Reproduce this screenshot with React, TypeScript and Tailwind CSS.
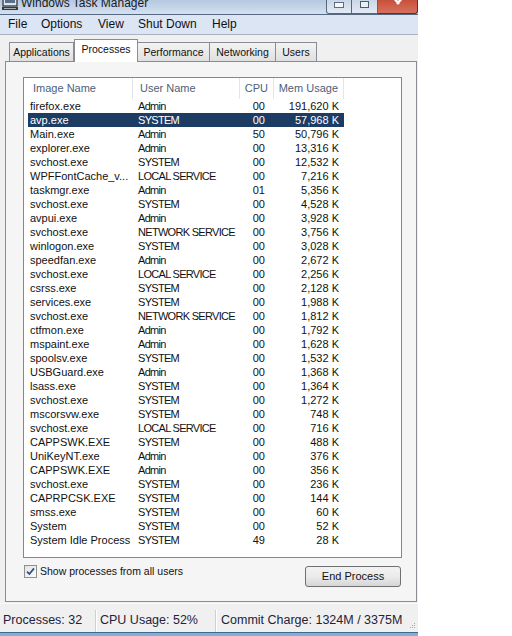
import React from 'react';

type Row = [string, string, string, string];

const rows: Row[] = [
  ['firefox.exe', 'Admin', '00', '191,620 K'],
  ['avp.exe', 'SYSTEM', '00', '57,968 K'],
  ['Main.exe', 'Admin', '50', '50,796 K'],
  ['explorer.exe', 'Admin', '00', '13,316 K'],
  ['svchost.exe', 'SYSTEM', '00', '12,532 K'],
  ['WPFFontCache_v...', 'LOCAL SERVICE', '00', '7,216 K'],
  ['taskmgr.exe', 'Admin', '01', '5,356 K'],
  ['svchost.exe', 'SYSTEM', '00', '4,528 K'],
  ['avpui.exe', 'Admin', '00', '3,928 K'],
  ['svchost.exe', 'NETWORK SERVICE', '00', '3,756 K'],
  ['winlogon.exe', 'SYSTEM', '00', '3,028 K'],
  ['speedfan.exe', 'Admin', '00', '2,672 K'],
  ['svchost.exe', 'LOCAL SERVICE', '00', '2,256 K'],
  ['csrss.exe', 'SYSTEM', '00', '2,128 K'],
  ['services.exe', 'SYSTEM', '00', '1,988 K'],
  ['svchost.exe', 'NETWORK SERVICE', '00', '1,812 K'],
  ['ctfmon.exe', 'Admin', '00', '1,792 K'],
  ['mspaint.exe', 'Admin', '00', '1,628 K'],
  ['spoolsv.exe', 'SYSTEM', '00', '1,532 K'],
  ['USBGuard.exe', 'Admin', '00', '1,368 K'],
  ['lsass.exe', 'SYSTEM', '00', '1,364 K'],
  ['svchost.exe', 'SYSTEM', '00', '1,272 K'],
  ['mscorsvw.exe', 'SYSTEM', '00', '748 K'],
  ['svchost.exe', 'LOCAL SERVICE', '00', '716 K'],
  ['CAPPSWK.EXE', 'SYSTEM', '00', '488 K'],
  ['UniKeyNT.exe', 'Admin', '00', '376 K'],
  ['CAPPSWK.EXE', 'Admin', '00', '356 K'],
  ['svchost.exe', 'SYSTEM', '00', '236 K'],
  ['CAPRPCSK.EXE', 'SYSTEM', '00', '144 K'],
  ['smss.exe', 'SYSTEM', '00', '60 K'],
  ['System', 'SYSTEM', '00', '52 K'],
  ['System Idle Process', 'SYSTEM', '49', '28 K'],
];

function TitleBar() {
  return (
    <div className="h-[14px] flex overflow-hidden bg-gradient-to-b from-[#b4c8e0] to-[#d4e1f0]">
      {/* app icon, mostly cut off by the top edge */}
      <svg width="18" height="14" viewBox="0 0 18 14" className="ml-[1px] shrink-0">
        <rect x="2" y="-6" width="14" height="12" fill="#dfe6ee" stroke="#2b2b2b" strokeWidth="1.2" />
        <rect x="4" y="-3" width="10" height="6" fill="#5a6f8a" />
        <rect x="1" y="7" width="16" height="3" fill="#3a3a3a" />
        <line x1="3" y1="8.5" x2="15" y2="8.5" stroke="#bfc7d0" strokeWidth="0.8" />
      </svg>
      <div className="ml-[2px] -mt-[3px] text-[12px] leading-[12px] text-[#1a1a1a] whitespace-nowrap">
        Windows Task Manager
      </div>
      <div className="ml-auto flex h-[14px]">
        <div className="w-[26px] h-[14px] border border-t-0 border-[#56687f] rounded-bl-[3px] bg-gradient-to-b from-[#c9d6e5] to-[#e3ebf4] flex justify-center">
          <div className="mt-[2px] w-[10px] h-[6px] bg-[#f4f7fb] border border-[#5d6c80]" />
        </div>
        <div className="w-[26px] h-[14px] border border-t-0 border-l-0 border-[#56687f] bg-gradient-to-b from-[#c9d6e5] to-[#e3ebf4] flex justify-center">
          <div className="mt-[1px] w-[9px] h-[7px] border border-[#4d5b6e] bg-[#e8eef5]" />
        </div>
        <div className="w-[40px] h-[14px] border border-t-0 border-l-0 border-[#6b2a22] rounded-br-[3px] bg-gradient-to-b from-[#c8503c] to-[#d6715c] flex justify-center">
          <svg width="12" height="10" viewBox="0 0 12 10">
            <path d="M1 -3 L7 4 M11 -3 L5 4" stroke="#ffffff" strokeWidth="2.4" />
          </svg>
        </div>
      </div>
    </div>
  );
}

function MenuBar() {
  return (
    <div className="h-[21px] border-t border-b border-t-[#55687f] border-b-[#a9b3c1] bg-[#dce5f3] flex items-center pl-[8px] text-[12px] leading-[19px] text-[#111]">
      <span className="w-[33px]">File</span>
      <span className="w-[57px]">Options</span>
      <span className="w-[40px]">View</span>
      <span className="w-[74px]">Shut Down</span>
      <span>Help</span>
    </div>
  );
}

function Tabs() {
  const idle = 'h-[19px] mb-[1px] border border-b-0 border-[#898c95] bg-gradient-to-b from-[#f3f3f3] to-[#e0e0e0] text-center text-[10.5px] leading-[18px] text-[#111]';
  return (
    <div className="relative z-10 -mb-px h-[23px] flex items-end pl-[9px]">
      <div className={`${idle} w-[65px]`}>Applications</div>
      <div className="w-[64px] h-[23px] border border-b-0 border-[#898c95] bg-white text-center text-[10.5px] leading-[18px] text-[#111]">
        Processes
      </div>
      <div className={`${idle} w-[73px] -ml-px`}>Performance</div>
      <div className={`${idle} w-[67px] -ml-px`}>Networking</div>
      <div className={`${idle} w-[42px] -ml-px`}>Users</div>
    </div>
  );
}

function ProcessList() {
  return (
    <div className="w-[379px] h-[481px] border border-[#828790] bg-white overflow-hidden">
      <div className="flex h-[21px] text-[11px] leading-[21px] text-[#4c607a]">
        <div className="w-[109px] pl-[9px] border-r border-[#e2e5ea]">Image Name</div>
        <div className="w-[107px] pl-[7px] border-r border-[#e2e5ea]">User Name</div>
        <div className="w-[34px] pr-[5px] text-right border-r border-[#e2e5ea]">CPU</div>
        <div className="w-[70px] pr-[5px] text-right border-r border-[#e2e5ea]">Mem Usage</div>
      </div>
      {rows.map((r, i) => {
        const sel = i === 1;
        return (
          <div
            key={i}
            className={`ml-[4px] flex w-[316px] h-[14px] text-[11px] leading-[14px] whitespace-nowrap ${sel ? 'bg-[#1c3c63] text-white' : 'text-[#111]'}`}
          >
            <div className="w-[104px] pl-[2px] overflow-hidden">{r[0]}</div>
            <div className="w-[108px] pl-[6px] overflow-hidden tracking-[-0.7px]">{r[1]}</div>
            <div className="w-[34px] pr-[9px] text-right">{r[2]}</div>
            <div className="w-[70px] pr-[5px] text-right">{r[3]}</div>
          </div>
        );
      })}
    </div>
  );
}

function Panel() {
  return (
    <div className="ml-[5px] w-[412px] h-[541px] border border-[#898c95] bg-[#f5f5f5] pt-[15px] pl-[17px]">
      <ProcessList />
      <div className="w-[379px] mt-[7px] flex justify-between px-[1px]">
        <div className="flex items-start h-[22px]">
          <div className="w-[13px] h-[13px] border border-[#8e8f8f] bg-gradient-to-br from-[#e4e4e4] to-[#fbfbfb] flex items-center justify-center">
            <svg width="9" height="9" viewBox="0 0 9 9">
              <path d="M1 4.6 L3.4 7 L8 1.4" fill="none" stroke="#2c4e86" strokeWidth="1.7" />
            </svg>
          </div>
          <span className="ml-[3px] text-[10.5px] leading-[13px] text-[#111]">Show processes from all users</span>
        </div>
        <div className="mt-[1px] w-[96px] h-[21px] rounded-[3px] border border-[#707070] bg-gradient-to-b from-[#f2f2f2] via-[#ebebeb] to-[#d6d6d6] text-center text-[11px] leading-[19px] text-[#111]">
          End Process
        </div>
      </div>
    </div>
  );
}

function StatusBar() {
  return (
    <div className="h-[29px] flex items-center pt-[5px] border-t border-[#fafafa] text-[12.5px] text-[#24223a] whitespace-nowrap">
      <div className="w-[95px] pl-[3px]">Processes: 32</div>
      <div className="w-[2px] h-[22px] border-l border-r border-l-[#cfcfcf] border-r-white" />
      <div className="w-[118px] pl-[3px]">CPU Usage: 52%</div>
      <div className="w-[2px] h-[22px] border-l border-r border-l-[#cfcfcf] border-r-white" />
      <div className="flex-1 pl-[4px]">Commit Charge: 1324M / 3375M</div>
      <svg width="8" height="8" viewBox="0 0 8 8" className="mr-[2px] mt-[8px]">
        <rect x="6" y="2" width="1" height="1" fill="#a8a8a8" />
        <rect x="4" y="4" width="1" height="1" fill="#a8a8a8" />
        <rect x="6" y="4" width="1" height="1" fill="#a8a8a8" />
        <rect x="2" y="6" width="1" height="1" fill="#a8a8a8" />
        <rect x="4" y="6" width="1" height="1" fill="#a8a8a8" />
        <rect x="6" y="6" width="1" height="1" fill="#a8a8a8" />
      </svg>
    </div>
  );
}

export default function App() {
  return (
    <div className="w-[512px] h-[636px] bg-white flex font-['Liberation_Sans',Arial,sans-serif]">
      <div className="w-[418px] h-[636px] flex flex-col bg-[#f0f0f0]">
        <TitleBar />
        <MenuBar />
        <div className="pt-[4px] pb-[1px] flex flex-col">
          <Tabs />
          <Panel />
        </div>
        <StatusBar />
        <div className="h-[4px] border-t border-[#3b6a94] bg-[#86aed3]" />
      </div>
    </div>
  );
}
